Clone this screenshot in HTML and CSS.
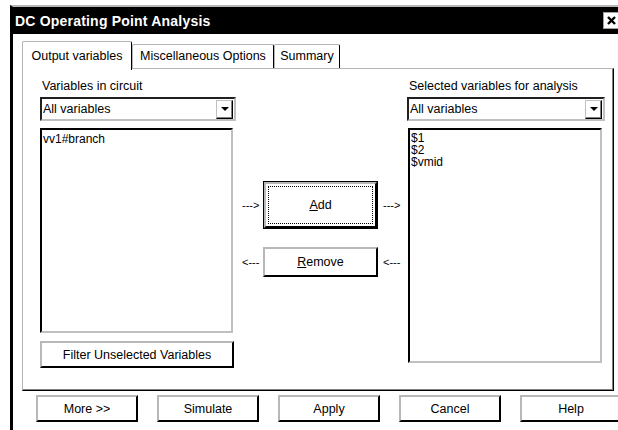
FILE: index.html
```html
<!DOCTYPE html>
<html>
<head>
<meta charset="utf-8">
<title>DC Operating Point Analysis</title>
<link rel="stylesheet" href="styles.css">
</head>
<body>
<div class="window">
  <div class="titlebar">
    <span class="title">DC Operating Point Analysis</span>
    <span class="close"><svg width="11" height="11" viewBox="0 0 11 11"><path d="M2 2 L9 9 M9 2 L2 9" stroke="#000" stroke-width="2.4" fill="none"/></svg></span>
  </div>
  <div class="client">
    <div class="tabs">
      <div class="tab active t-out">Output variables</div>
      <div class="tab t-misc">Miscellaneous Options</div>
      <div class="tab t-sum">Summary</div>
    </div>
    <div class="panel">
      <div class="col left">
        <div class="label">Variables in circuit</div>
        <div class="combo"><span class="combo-text">All variables</span><span class="arrow"><span class="tri"></span></span></div>
        <div class="list list-left"><div class="item">vv1#branch</div></div>
        <button class="btn filter">Filter Unselected Variables</button>
      </div>
      <div class="mid">
        <div class="mrow">
          <span class="arr">---&gt;</span>
          <button class="btn default add"><span class="face"><span class="focus"><u>A</u>dd</span></span></button>
          <span class="arr">---&gt;</span>
        </div>
        <div class="mrow">
          <span class="arr">&lt;---</span>
          <button class="btn remove"><u>R</u>emove</button>
          <span class="arr">&lt;---</span>
        </div>
      </div>
      <div class="col right">
        <div class="label">Selected variables for analysis</div>
        <div class="combo"><span class="combo-text">All variables</span><span class="arrow"><span class="tri"></span></span></div>
        <div class="list list-right">
          <div class="item">$1</div>
          <div class="item">$2</div>
          <div class="item">$vmid</div>
        </div>
      </div>
    </div>
    <div class="buttons">
      <button class="btn bottom">More &gt;&gt;</button>
      <button class="btn bottom">Simulate</button>
      <button class="btn bottom">Apply</button>
      <button class="btn bottom">Cancel</button>
      <button class="btn bottom">Help</button>
    </div>
  </div>
</div>
</body>
</html>
```
FILE: styles.css
```css
* { box-sizing: border-box; }
html, body { margin: 0; padding: 0; }
body {
  width: 618px;
  height: 430px;
  overflow: hidden;
  background: #fff;
  font-family: "Liberation Sans", Arial, sans-serif;
  font-size: 12.5px;
  color: #000;
}
.window {
  margin: 5px 0 0 10px;
  width: 620px;
  height: 440px;
  border-top: 2px solid #b8b8b8;
  border-left: 3px solid #000;
}
.titlebar {
  height: 27px;
  background: #000;
  color: #fff;
  display: flex;
  align-items: center;
  justify-content: space-between;
  padding-left: 2px;
}
.title {
  font-weight: bold;
  font-size: 14px;
  letter-spacing: 0.2px;
}
.close {
  width: 16px;
  height: 17px;
  margin-right: 11px;
  background: #fff;
  border: 1px solid #a0a0a0;
  display: flex;
  align-items: center;
  justify-content: center;
}
.client {
  padding: 7px 0 0 9px;
}
.tabs {
  display: flex;
  align-items: flex-end;
  height: 27px;
}
.tab {
  height: 24px;
  line-height: 22px;
  text-align: center;
  background: #fff;
  border: 1px solid #b4b4b4;
  border-right: 1px solid #000;
  border-bottom: none;
  border-radius: 2px 2px 0 0;
  white-space: nowrap;
}
.t-out { width: 110px; }
.t-misc { width: 142px; }
.t-sum { width: 66px; }
.tab.active {
  height: 29px;
  margin-bottom: -2px;
  position: relative;
  z-index: 1;
  line-height: 28px;
}
.panel {
  width: 592px;
  height: 323px;
  border: 1px solid;
  border-color: #b4b4b4 #000 #000 #b4b4b4;
  box-shadow: inset -1px -1px #808080;
  padding: 10px 0 0 17px;
  display: flex;
}
.col { display: flex; flex-direction: column; }
.col.left { width: 196px; }
.col.right { width: 198px; }
.label {
  height: 14px;
  line-height: 14px;
  padding-left: 2px;
  white-space: nowrap;
}
.combo {
  margin-top: 4px;
  height: 24px;
  border: 2px solid;
  border-color: #202020 #c0c0c0 #c0c0c0 #202020;
  display: flex;
  align-items: center;
  justify-content: space-between;
}
.combo-text { padding-left: 1px; }
.arrow {
  width: 17px;
  height: 19px;
  margin-right: 1px;
  border: 1px solid;
  border-color: #c0c0c0 #000 #000 #c0c0c0;
  box-shadow: inset -1px -1px #808080;
  display: flex;
  align-items: center;
  justify-content: center;
}
.tri {
  width: 0;
  height: 0;
  border-left: 4px solid transparent;
  border-right: 4px solid transparent;
  border-top: 4px solid #000;
}
.list {
  margin-top: 7px;
  border: 2px solid;
  border-color: #000 #c0c0c0 #c0c0c0 #000;
  font-size: 12px;
  line-height: 12px;
  padding: 3px 2px 0 1px;
}
.list-left { width: 193px; height: 205px; }
.list-right { width: 194px; height: 235px; margin-left: 1px; padding-top: 2px; }
.btn {
  font-family: inherit;
  font-size: 12.5px;
  color: #000;
  background: #fff;
  border: 2px solid;
  border-color: #b8b8b8 #000 #000 #b8b8b8;
  padding: 0;
  margin: 0;
}
.filter {
  margin-top: 8px;
  width: 194px;
  height: 27px;
}
.mid {
  width: 171px;
  padding: 102px 0 0 6px;
  display: flex;
  flex-direction: column;
  gap: 18px;
}
.mrow {
  display: flex;
  align-items: center;
}
.arr {
  width: 21px;
  font-size: 11px;
  white-space: nowrap;
}
.mrow .btn { width: 115px; margin-right: 5px; }
.add {
  height: 48px;
  border: 1px solid #000;
}
.add .face {
  display: flex;
  height: 100%;
  border: 2px solid;
  border-color: #b8b8b8 #000 #000 #b8b8b8;
  padding: 2px;
}
.add .focus {
  flex: 1;
  border: 1px dotted #000;
  display: flex;
  align-items: center;
  justify-content: center;
}
.remove { height: 30px; }
.buttons {
  margin: 4px 0 0 14px;
  display: flex;
  gap: 19px;
}
.bottom {
  flex: none;
  width: 102px;
  height: 27px;
}
```
